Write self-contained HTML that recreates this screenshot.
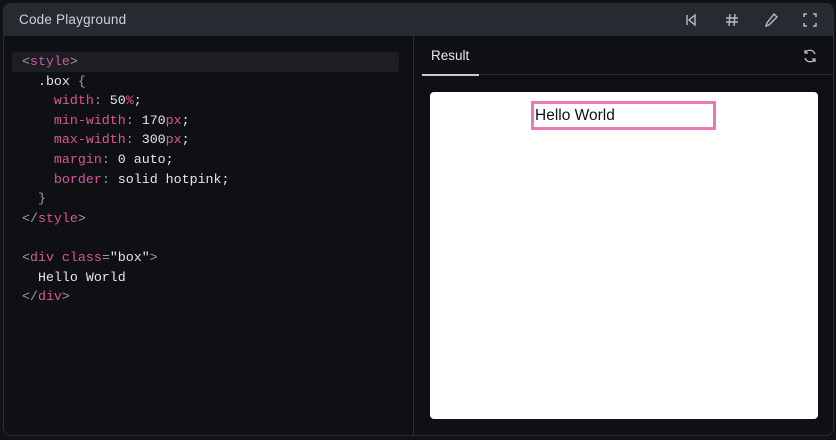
<!DOCTYPE html>
<html><head><style>
*{margin:0;padding:0;box-sizing:border-box}
body{width:836px;height:440px;background:#111216;overflow:hidden;font-family:"Liberation Sans",sans-serif}
.wrap{position:absolute;left:3px;top:3px;width:831px;height:433px;border:1px solid #2a2e35;border-radius:8px;background:#0f1014;overflow:hidden}
.hdr{height:32px;background:#262a31;position:relative}
.hdr .t{position:absolute;left:15px;top:8px;color:#cfd2d7;font-size:13.5px;letter-spacing:.2px}
.icons svg{position:absolute;top:8px}
.left{position:absolute;left:0;top:32px;width:410px;bottom:0;border-right:1px solid #2a2e35}
.hl{position:absolute;left:8px;top:16px;width:387px;height:20px;background:#1c1e24;border-radius:3px}
pre{position:absolute;left:18px;top:16px;font-family:"Liberation Mono",monospace;font-size:13.3px;line-height:19.6px;color:#e6e6e6}
.k{color:#d9569b}.g{color:#9a9da3}
.tab{position:absolute;left:427px;top:44px;color:#e6e6e6;font-size:13.5px}
.tabline{position:absolute;left:418px;top:70px;width:412px;height:1px;background:#2a2e35}
.tabul{position:absolute;left:418px;top:70px;width:57px;height:2px;background:#c9ccd1}
.res{position:absolute;left:426px;top:88px;width:388px;height:327px;background:#fff;border-radius:4px}
.box{position:absolute;left:101px;top:9px;width:185px;height:29px;border:3px solid #ec78b5;font-size:15.5px;color:#111;padding:3px 0 0 1px}
</style></head><body>
<div class="wrap">
<div class="hdr"><div class="t">Code Playground</div>
<div class="icons">
<svg style="left:679px" width="16" height="16" viewBox="0 0 16 16" fill="none" stroke="#b9bcc2" stroke-width="1.4"><path d="M4 3v10M12 3L6 8l6 5z"/></svg>
<svg style="left:720px" width="16" height="16" viewBox="0 0 16 16" fill="none" stroke="#b9bcc2" stroke-width="1.4"><path d="M6 2L5 14M11 2l-1 12M2 6h12M2 10h12"/></svg>
<svg style="left:759px" width="16" height="16" viewBox="0 0 16 16" fill="none" stroke="#b9bcc2" stroke-width="1.4"><path d="M11 2l3 3-8 8-3 1 1-3z"/></svg>
<svg style="left:798px" width="16" height="16" viewBox="0 0 16 16" fill="none" stroke="#b9bcc2" stroke-width="1.5"><path d="M2 5V2h3M11 2h3v3M14 11v3h-3M5 14H2v-3"/></svg>
</div></div>
<div class="left"><div class="hl"></div>
<pre><span class="g">&lt;</span><span class="k">style</span><span class="g">&gt;</span>
  .box <span class="g">{</span>
    <span class="k">width</span><span class="g">:</span> 50<span class="k">%</span>;
    <span class="k">min-width</span><span class="g">:</span> 170<span class="k">px</span>;
    <span class="k">max-width</span><span class="g">:</span> 300<span class="k">px</span>;
    <span class="k">margin</span><span class="g">:</span> 0 auto;
    <span class="k">border</span><span class="g">:</span> solid hotpink;
  <span class="g">}</span>
<span class="g">&lt;/</span><span class="k">style</span><span class="g">&gt;</span>

<span class="g">&lt;</span><span class="k">div</span> <span class="k">class</span><span class="g">=</span>"box"<span class="g">&gt;</span>
  Hello World
<span class="g">&lt;/</span><span class="k">div</span><span class="g">&gt;</span></pre></div>
<div class="tab">Result</div>
<svg style="position:absolute;left:798px;top:44px" width="16" height="16" viewBox="0 0 16 16" fill="none" stroke="#b9bcc2" stroke-width="1.3"><path d="M13 6A5.5 5.5 0 0 0 3 5M3 2v3h3M3 10a5.5 5.5 0 0 0 10 1M13 14v-3h-3"/></svg>
<div class="tabline"></div><div class="tabul"></div>
<div class="res"><div class="box">Hello World</div></div>
</div>
</body></html>
